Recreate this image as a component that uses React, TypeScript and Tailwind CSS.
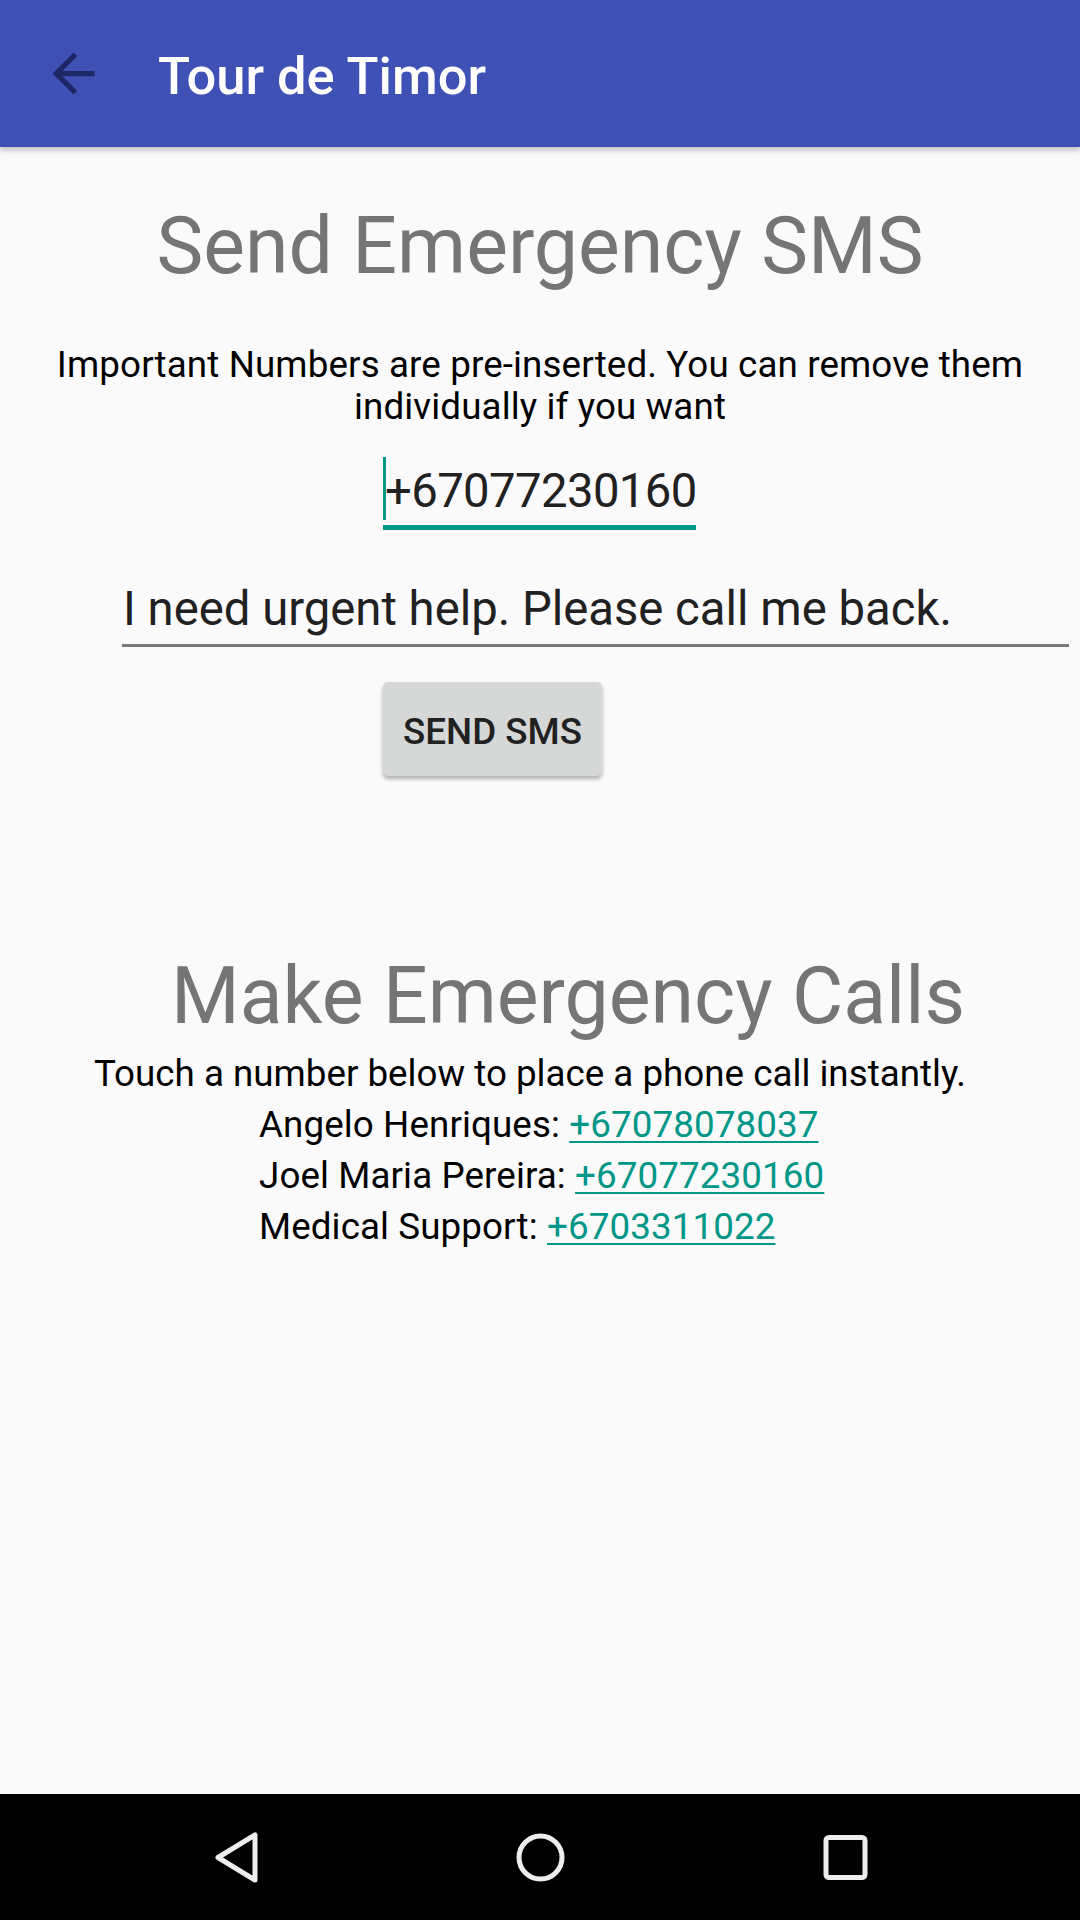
import React from 'react';

const contacts = [
  { name: 'Angelo Henriques', phone: '+67078078037' },
  { name: 'Joel Maria Pereira', phone: '+67077230160' },
  { name: 'Medical Support', phone: '+6703311022' },
];

const App: React.FC = () => {
  return (
    <div className="flex h-[1920px] w-[1080px] flex-col bg-[#FAFAFA] font-['Roboto',sans-serif]">
      {/* toolbar */}
      <div className="relative z-10 flex h-[147px] items-center bg-[#3F51B5] shadow-[0_3px_6px_rgba(0,0,0,0.25)]">
        <div className="ml-[42px] flex h-[63px] w-[63px] items-center justify-center">
          <svg width="63" height="63" viewBox="0 0 24 24">
            <path d="M20 11H7.83l5.59-5.59L12 4l-8 8 8 8 1.41-1.41L7.83 13H20v-2z" fill="#1e2866" />
          </svg>
        </div>
        <h1 className="ml-[53px] mt-[4px] text-[52.5px] font-medium leading-[62px] text-white">Tour de Timor</h1>
      </div>

      <div className="flex-1">
        <h2 className="mt-[53px] text-center text-[78.75px] leading-[92px] text-[#757575]">Send Emergency SMS</h2>
        <p className="mt-[52px] px-[36px] text-center text-[36.75px] leading-[42px] tracking-[0.12px] text-black">
          Important Numbers are pre-inserted. You can remove them individually if you want
        </p>

        <div className="relative ml-[383px] mt-[35px] w-[313px] border-b-[5px] border-[#009688] pb-[6px]">
          <span className="absolute left-0 top-[-6px] h-[63px] w-[3px] bg-[#009688]" />
          <div className="pl-[2px] text-[47.25px] leading-[56px] tracking-[-0.6px] text-[#212121]">+67077230160</div>
        </div>

        <div className="ml-[122px] mt-[51px] w-[947px] border-b-[3px] border-[#7a7a7a] pb-[7px]">
          <div className="pl-[1px] text-[47.25px] leading-[56px] text-[#212121]">
            I need urgent help. Please call me back.
          </div>
        </div>

        <button className="ml-[383px] mt-[35px] flex h-[94px] w-[219px] items-center justify-center rounded-[5px] bg-[#D6D7D7] pt-[6px] text-[36.75px] font-medium text-[#212121] shadow-[0_3px_4px_rgba(0,0,0,0.3)]">
          SEND SMS
        </button>

        <h2 className="mt-[174px] pl-[56px] text-center text-[78.75px] leading-[92px] text-[#757575]">
          Make Emergency Calls
        </h2>
        <p className="mt-[6px] pr-[20px] text-center text-[36.75px] leading-[51px] text-black">
          Touch a number below to place a phone call instantly.
        </p>
        <div className="ml-[259px] flex flex-col text-[36.75px] leading-[51px] tracking-[0.1px] text-black">
          {contacts.map(c => (
            <div key={c.phone}>
              {c.name}:{' '}
              <a className="text-[#009688] underline decoration-[2px] underline-offset-[4px]">{c.phone}</a>
            </div>
          ))}
        </div>
      </div>

      {/* navigation bar */}
      <div className="flex h-[126px] items-center justify-center gap-[242px] bg-black">
        <svg width="63" height="63" viewBox="0 0 63 63">
          <polygon points="14,31.5 51,9 51,54" fill="none" stroke="#EEEEEE" strokeWidth="5" strokeLinejoin="round" />
        </svg>
        <svg width="63" height="63" viewBox="0 0 63 63">
          <circle cx="31.5" cy="31.5" r="21.5" fill="none" stroke="#EEEEEE" strokeWidth="5" />
        </svg>
        <svg width="63" height="63" viewBox="0 0 63 63">
          <rect x="12" y="11.5" width="39" height="40" rx="3" fill="none" stroke="#EEEEEE" strokeWidth="5" />
        </svg>
      </div>
    </div>
  );
};

export default App;
